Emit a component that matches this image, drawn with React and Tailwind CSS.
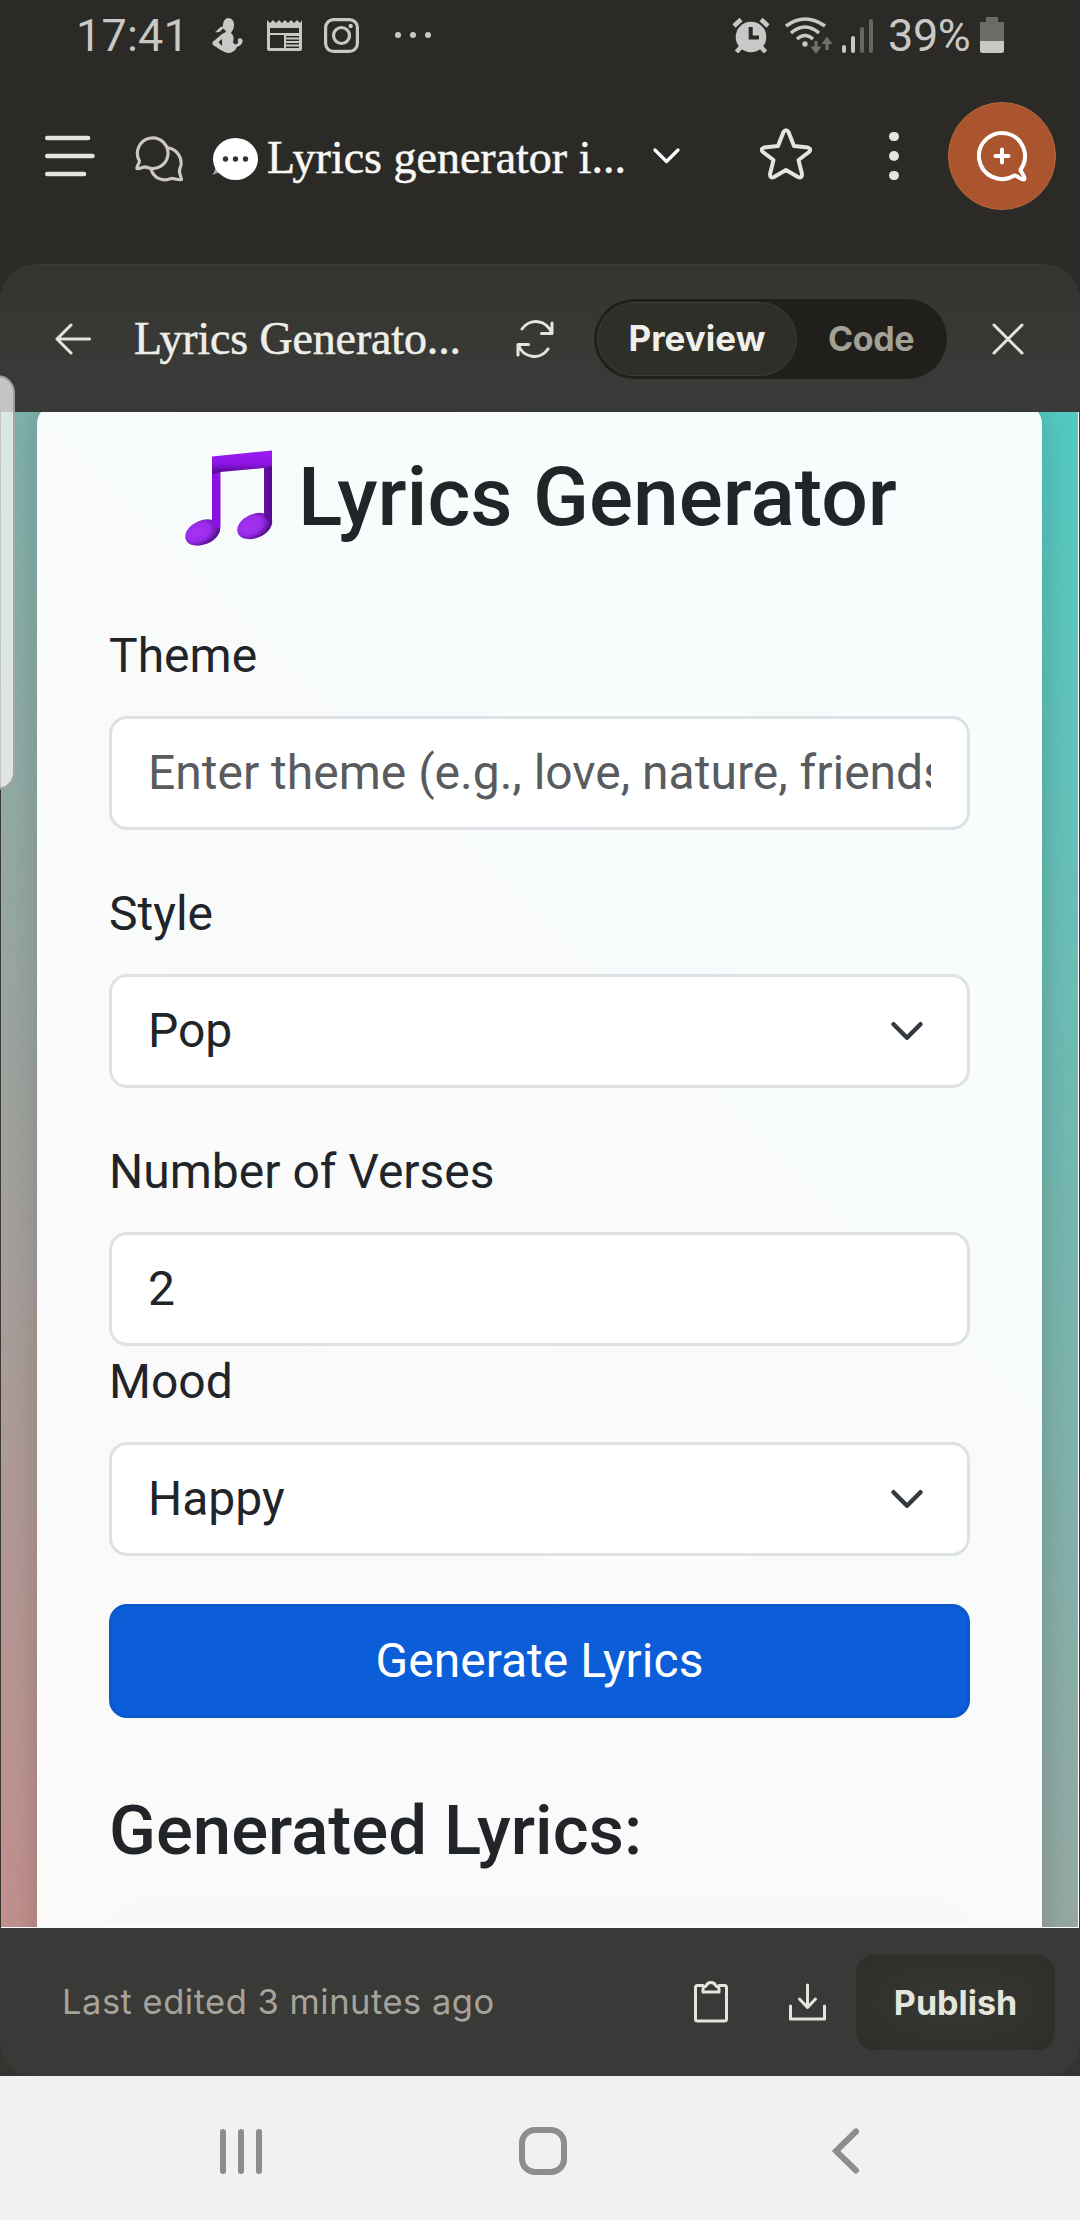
import React from "react";

const Line = ({ children, className, ...p }) => (
  <svg fill="none" stroke="currentColor" strokeLinecap="round" strokeLinejoin="round" className={"block shrink-0 " + className} {...p}>
    {children}
  </svg>
);

function StatusBar() {
  return (
    <div className="flex h-[72px] shrink-0 items-start pt-[9px] text-[#c8c8c6]">
      <span className="ml-[76px] w-[136px] text-[45px] leading-[54px] tracking-[0.2px]">17:41</span>
      <svg className="mt-[9px] block h-[35px] w-[31px] shrink-0" viewBox="0 0 31 35" fill="currentColor">
        <path d="M16 0C20 0 22 3 22 7C22 11 20 13 19 15C22 18 22 20 21 24C22 27 24 27 26 25L26 23C25 20 29 19 30.500 22C31 26 28 28 25 29C23 33 20 35 16 35C10 34 5 29 1 27C-.5 25 1 23 3 22L10 16L13 14.500L14 13L11 10.500C9 13 7 15 3 14C6 13 6 9 11 8.500C11 4 12 1 16 0ZM10 21L6.500 24L10 28Z" fillRule="evenodd" />
      </svg>
      <svg className="mt-[10px] ml-[24px] block h-[33px] w-[35px] shrink-0" viewBox="0 0 35 33" fill="currentColor">
        <path fillRule="evenodd" d="M0 1L3 4L6 1L9 4L12 1L15 4L18 1L21 4L24 1L27 4L30 1L33 4L35 1V30Q35 32 33 32H2Q0 32 0 30ZM3 9V14H32V9ZM3 16V29H17V16ZM19 17V18.500H32V17ZM19 20.500V22H32V20.500ZM19 24V25.500H32V24ZM19 27.500V29H32V27.500Z" />
      </svg>
      <Line className="mt-[9px] ml-[22px] h-[35px] w-[35px]" viewBox="0 0 35 35" strokeWidth="3.2">
        <rect x="1.600" y="1.600" width="31.800" height="31.800" rx="8" />
        <circle cx="17.500" cy="17.500" r="8" />
        <circle cx="26.700" cy="8" r="2.200" fill="currentColor" stroke="none" />
      </Line>
      <div className="mt-[23px] ml-[36px] flex gap-[9px]">
        <i className="size-[6px] rounded-full bg-current" />
        <i className="size-[6px] rounded-full bg-current" />
        <i className="size-[6px] rounded-full bg-current" />
      </div>
      <svg className="mt-[8px] ml-auto block h-[36px] w-[38px] shrink-0" viewBox="0 0 38 36" fill="none">
        <g stroke="currentColor" strokeWidth="4.500"><path d="M2 9L9 2.500M36 9L29 2.500M9 30L4.500 35M29 30L33.500 35" /></g>
        <circle cx="19" cy="20" r="15.300" fill="currentColor" />
        <path d="M18.700 10V20.500H27" stroke="#2b2a27" strokeWidth="4" />
      </svg>
      <svg className="mt-[8px] ml-[15px] block h-[37px] w-[48px] shrink-0" viewBox="0 0 48 37" fill="none" stroke="currentColor" strokeWidth="3.500">
        <path d="M1 9Q20 -5 40 9M6 16Q20 4 34 16M12 22Q20 15 28 22" />
        <circle cx="20" cy="27" r="2.700" fill="currentColor" stroke="none" />
        <path d="M31 24V31M42 33V25" stroke="#70706d" strokeWidth="3.200" />
        <path d="M25.500 29.500H36.500L31 37ZM36.500 27H47.500L42 19.500Z" fill="#70706d" stroke="none" />
      </svg>
      <div className="mt-[10px] ml-[9px] flex h-[34px] items-end gap-[5px]">
        <i className="h-[8px] w-[4px] rounded-full bg-current" />
        <i className="h-[17px] w-[4px] rounded-full bg-current" />
        <i className="h-[26px] w-[4px] rounded-full bg-[#666663]" />
        <i className="h-[34px] w-[4px] rounded-full bg-[#666663]" />
      </div>
      <span className="ml-[15px] w-[92px] text-[45px] leading-[54px] tracking-[-0.4px]">39%</span>
      <svg className="mt-[8px] mr-[76px] block h-[36px] w-[24px] shrink-0" viewBox="0 0 24 36">
        <path d="M6 0H18V5H24V24H0V5H6Z" fill="#6b6b68" />
        <path d="M0 24H24V34Q24 36 22 36H2Q0 36 0 34Z" fill="currentColor" />
      </svg>
    </div>
  );
}

function AppHeader() {
  return (
    <header className="flex h-[168px] shrink-0 items-center pr-[24px] text-[#e5e5df]">
      <Line className="ml-[45px] h-[44px] w-[50px]" viewBox="0 0 50 44" strokeWidth="4.600">
        <path d="M2.300 4H43M2.300 22H47.500M2.300 40H39" />
      </Line>
      <Line className="mt-[6px] ml-[40px] h-[46px] w-[48px] text-[#cbc9bf]" viewBox="0 0 48 46" strokeWidth="3.200">
        <path d="M4.500 25A15.300 15.300 0 1 1 11 31C8 30.500 5 33.500 2 32.500C1 31 4.500 27.500 4.500 25Z" />
        <path d="M34 12C42 14 47 21 46 29C45.500 32 44 33 44.500 36L46.500 43.500C43 44.500 39 42 36 42.500C28 46 19 42 16.500 34.500" />
      </Line>
      <svg className="mt-[6px] ml-[29px] block h-[44px] w-[48px] shrink-0" viewBox="0 0 48 44">
        <path d="M0 38Q4 34 3 28L11 34Z" fill="#aaa" />
        <ellipse cx="23.500" cy="22" rx="22.500" ry="21" fill="white" />
        <g fill="#333"><circle cx="13.500" cy="22" r="2.700" /><circle cx="23.500" cy="22" r="2.700" /><circle cx="33.500" cy="22" r="2.700" /></g>
      </svg>
      <h1 className="mt-[4px] ml-[7px] w-[358px] font-['Liberation_Serif',serif] text-[46px] leading-[60px] whitespace-nowrap text-[#f8f8f5] [-webkit-text-stroke:0.5px]">Lyrics generator i...</h1>
      <Line className="ml-[28px] h-[16px] w-[27px] text-white" viewBox="0 0 27 16" strokeWidth="3.200">
        <path d="M2 2L13.500 13.500L25 2" />
      </Line>
      <Line className="-mt-[5px] ml-[80px] h-[52px] w-[52px]" viewBox="0 0 52 52" strokeWidth="4">
        <path d="M23.500 4Q26 .5 28.500 4L34 18L48 19.500Q52 21 49 24L38.500 32L42 46Q42 51 38 49L26 42L14 49Q10 51 10 46L13.500 32L3 24Q0 21 4 19.500L18 18Z" />
      </Line>
      <div className="ml-[77px] flex flex-col gap-[10px]">
        <i className="size-[9.500px] rounded-full bg-current" />
        <i className="size-[9.500px] rounded-full bg-current" />
        <i className="size-[9.500px] rounded-full bg-current" />
      </div>
      <div className="ml-auto flex size-[108px] shrink-0 items-center justify-center rounded-full border border-[#b9683a] bg-[#ab552f]">
        <Line className="h-[52px] w-[50px] text-white" viewBox="0 0 50 52" strokeWidth="4">
          <path d="M43.500 39.600A23 23 0 1 0 37 45.600C40 45 43 49.500 47 49.500C49.500 47.500 44 43 43.500 39.600Z" />
          <path d="M25 19.500V32.500M18.500 26H31.500" />
        </Line>
      </div>
    </header>
  );
}

function PanelHeader() {
  return (
    <div className="flex h-[147px] shrink-0 items-center text-[#e5e5df]">
      <Line className="ml-[55px] h-[32px] w-[36px]" viewBox="0 0 36 32" strokeWidth="3">
        <path d="M16 2L2 16L16 30M2 16H34.500" />
      </Line>
      <h2 className="mt-px ml-[43px] w-[330px] font-['Liberation_Serif',serif] text-[46px] leading-[60px] tracking-[-0.15px] whitespace-nowrap text-[#eeeee9] [-webkit-text-stroke:0.5px]">Lyrics Generato...</h2>
      <Line className="ml-[52px] h-[38px] w-[38px]" viewBox="0 0 38 38" strokeWidth="3">
        <path d="M6 9A16.500 16.500 0 0 1 35.500 13M36 3V13.500H25.500M32 29A16.500 16.500 0 0 1 2.500 25M2 35V24.500H12.500" />
      </Line>
      <div className="ml-[40px] flex h-[80px] w-[353px] items-center rounded-full bg-[#211f1b] p-[3px] font-[Inter,sans-serif] text-[35px] font-bold">
        <span className="flex h-[74px] w-[200px] items-center justify-center rounded-full border border-[#3c3c36] bg-[#2f2f2a] text-[#f0efea]">Preview</span>
        <span className="flex-1 pl-px text-center text-[34px] tracking-[-0.4px] text-[#a3a095]">Code</span>
      </div>
      <Line className="ml-[45px] h-[32px] w-[32px]" viewBox="0 0 32 32" strokeWidth="3">
        <path d="M2 2L30 30M30 2L2 30" />
      </Line>
    </div>
  );
}

function Field({ label, value, select, placeholder, className }) {
  return (
    <div className={"flex flex-col gap-6 " + (className || "")}>
      <label className="h-[72px] leading-[72px]">{label}</label>
      <div className="flex h-[114px] items-center justify-between rounded-[18px] border-[3px] border-[#dee2e6] bg-white px-[36px]">
        <span className={"overflow-hidden whitespace-nowrap leading-[72px] " + (placeholder ? "text-[#595c5f]" : "")}>{value}</span>
        {select && (
          <Line className="mr-[6px] size-[36px] text-[#343a40]" viewBox="0 0 16 16" strokeWidth="2">
            <path d="m2 5 6 6 6-6" />
          </Line>
        )}
      </div>
    </div>
  );
}

function MusicNote() {
  return (
    <svg className="block h-[96px] w-[88px] shrink-0" viewBox="0 0 88 96">
      <defs>
        <linearGradient id="beam" x1="0" y1="0" x2="0" y2="1">
          <stop offset="0" stopColor="#9a1cf0" /><stop offset=".55" stopColor="#8f14e8" /><stop offset="1" stopColor="#4b0a80" />
        </linearGradient>
        <linearGradient id="stem"><stop offset="0" stopColor="#8a12e0" /><stop offset=".5" stopColor="#9416ee" /><stop offset="1" stopColor="#540b8e" /></linearGradient>
        <radialGradient id="head" cx=".38" cy=".4" r=".65">
          <stop offset="0" stopColor="#a832f5" /><stop offset=".55" stopColor="#9a2bea" /><stop offset="1" stopColor="#4d0b83" />
        </radialGradient>
      </defs>
      <ellipse cx="17.700" cy="82.500" rx="18.300" ry="12" transform="rotate(-23 17.700 82.500)" fill="url(#head)" />
      <ellipse cx="69.700" cy="76" rx="18.300" ry="12" transform="rotate(-23 69.700 76)" fill="url(#head)" />
      <path d="M27 7L35.500 18V77Q33 82 27 72ZM79 16L87 2V70Q85 76 79 66Z" fill="url(#stem)" />
      <path d="M27 6.500L87 .5V16L79 18L35.500 22L27 24Z" fill="url(#beam)" />
    </svg>
  );
}

function Preview() {
  return (
    <div className="mr-px ml-px h-[1516px] shrink-0 overflow-hidden border-r border-b border-white bg-[linear-gradient(45deg,#c4908d,#52cbc2)] px-[36px]">
      <main className="-mt-2 h-[1560px] rounded-[20px] bg-white/95 px-[72px] pt-[44px] text-[48px] text-[#212529] shadow-[0_0_36px_rgba(0,0,0,0.18)]">
        <h1 className="flex h-[99px] items-center gap-[25px] pl-[76px] text-[82.200px] leading-[99px] font-medium whitespace-nowrap">
          <MusicNote />
          Lyrics Generator
        </h1>
        <form className="mt-[73px] flex flex-col">
          <Field label="Theme" value="Enter theme (e.g., love, nature, friendship)" placeholder />
          <Field label="Style" value="Pop" select className="mt-12" />
          <Field label="Number of Verses" value="2" className="mt-12" />
          <Field label="Mood" value="Happy" select />
          <button type="button" className="mt-12 h-[114px] rounded-[18px] border-[3px] border-[#0a58ca] bg-[#0b5ed7] text-white">Generate Lyrics</button>
        </form>
        <h3 className="mt-[71px] text-[68.900px] leading-[83px] font-medium">Generated Lyrics:</h3>
        <div className="mt-6 h-[200px] rounded-[30px] bg-[#f8f9fb]" />
      </main>
    </div>
  );
}

function Footer() {
  return (
    <div className="flex h-[148px] shrink-0 items-center rounded-b-[34px] bg-[#393937] font-[Inter,sans-serif] text-[#e5e5df]">
      <span className="ml-[62px] w-[632px] text-[34.500px] tracking-[0.5px] whitespace-nowrap text-[#a6a39a]">Last edited 3 minutes ago</span>
      <Line className="h-[42px] w-[34px]" viewBox="0 0 34 42" strokeWidth="3">
        <path d="M9 4.500H3.500Q1.500 4.500 1.500 6.500V38Q1.500 40 3.500 40H30.500Q32.500 40 32.500 38V6.500Q32.500 4.500 30.500 4.500H25M9 11V8Q9 6 12 5Q13.500 1.500 17 1.500T22 5Q25 6 25 8V11Z" />
      </Line>
      <Line className="ml-[61px] h-[38px] w-[37px]" viewBox="0 0 37 38" strokeWidth="3">
        <path d="M18.500 2V24M10.500 16L18.500 24.500L26.500 16M1.500 23V36H35.500V23" />
      </Line>
      <button type="button" className="ml-[30px] h-[95px] w-[199px] rounded-[18px] bg-[radial-gradient(ellipse,#353532_20%,#2d2d2a)] text-[34px] font-bold text-[#e5e5dc]">Publish</button>
    </div>
  );
}

function NavBar() {
  return (
    <nav className="flex h-[144px] shrink-0 items-center bg-[#f1f1f1] pt-[6px] text-[#8d8d8d]">
      <Line className="ml-[219px] h-[45px] w-[44px]" viewBox="0 0 44 45" strokeWidth="6">
        <path d="M4 3V42M22 3V42M40 3V42" />
      </Line>
      <div className="ml-[256px] size-[48px] rounded-[16px] border-[6px] border-[#8d8d8d]" />
      <Line className="ml-[265px] h-[46px] w-[28px]" viewBox="0 0 28 46" strokeWidth="6">
        <path d="M24 3.500L4 23L24 42.500" strokeLinejoin="miter" />
      </Line>
    </nav>
  );
}

export default function App() {
  return (
    <div className="relative flex h-[2220px] w-[1080px] flex-col overflow-hidden bg-[#2b2a27] font-[Roboto,sans-serif]">
      <StatusBar />
      <AppHeader />
      <section className="mt-[24px] flex h-[1812px] shrink-0 flex-col rounded-t-[36px] border-t border-[#3a3a36] bg-[linear-gradient(#34342f,#393937_100px,#393937_1500px,#343431_1700px)]">
        <PanelHeader />
        <Preview />
        <Footer />
      </section>
      <NavBar />
      <div className="absolute top-[375px] -left-5 h-[415px] w-[35px] rounded-[20px] border-2 border-[#8b8b8b]/70 bg-white/70" />
    </div>
  );
}
